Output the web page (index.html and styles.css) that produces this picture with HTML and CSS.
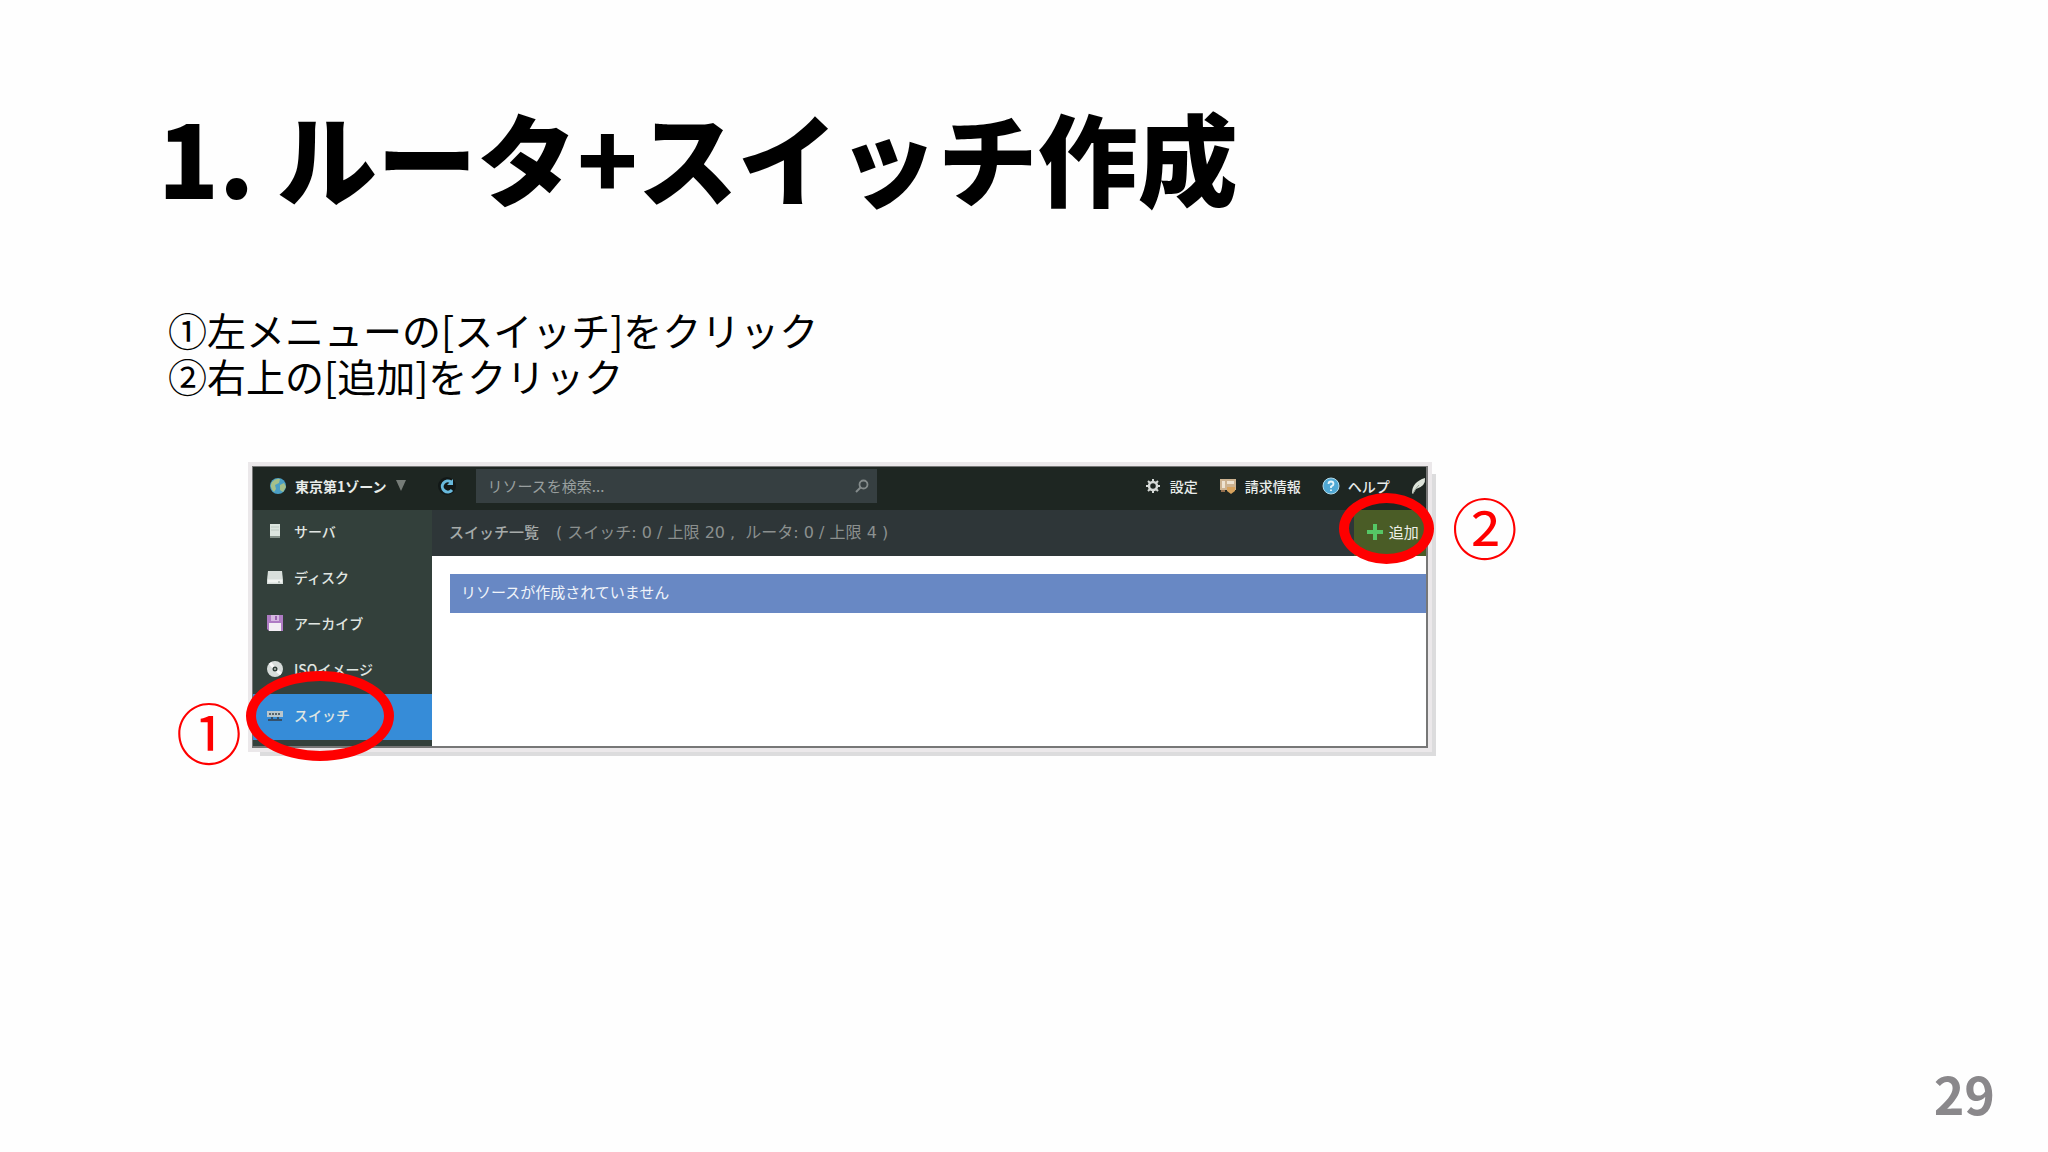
FILE: index.html
```html
<!DOCTYPE html>
<html lang="ja">
<head>
<meta charset="utf-8">
<title>1. ルータ+スイッチ作成</title>
<link rel="stylesheet" href="styles.css">
</head>
<body>
<main class="slide">
  <h1 class="title">1. ルータ+スイッチ作成</h1>
  <p class="steps">①左メニューの[スイッチ]をクリック<br>②右上の[追加]をクリック</p>

  <section class="console" aria-label="コントロールパネル">
    <header class="topbar">
      <button class="zone" type="button">
        <svg class="icon" viewBox="0 0 18 18"><circle cx="9" cy="9" r="8" fill="#4a9fc6"/><path d="M3 5Q7 1 11 2L10 6 6 8 7 12 5 15Q0 10 3 5ZM11 8l4-2 2 4-3 5-3-2Z" fill="#a5c08a"/></svg>
        <span>東京第1ゾーン</span>
        <svg class="caret" viewBox="0 0 12 11"><path d="M1 0H11L6 11Z" fill="#767c78"/></svg>
      </button>
      <button class="reload" type="button" aria-label="更新">
        <svg class="icon" viewBox="0 0 18 18"><circle cx="9" cy="9" r="9" fill="#121817"/><path d="M14 13A5.500 5.500 0 1 1 13 5" fill="none" stroke="#68b9dc" stroke-width="3"/><path d="M15 2V8H9Z" fill="#68b9dc"/></svg>
      </button>
      <label class="search">
        <input type="text" placeholder="リソースを検索..." aria-label="リソースを検索">
        <svg class="lens" viewBox="0 0 14 14"><circle cx="8.500" cy="5.500" r="4" fill="none" stroke="#848b8b" stroke-width="1.800"/><path d="M5.500 8.500 1 13" stroke="#848b8b" stroke-width="2"/></svg>
      </label>
      <nav class="tools">
        <a href="#settings"><svg class="icon" viewBox="0 0 18 18"><circle cx="9" cy="9" r="4" fill="none" stroke="#d5d9d7" stroke-width="2.500"/><path d="M9 2V5M9 13V16M2 9H5M13 9H16M4 4 6 6M12 12l2 2M4 14l2-2M12 6l2-2" stroke="#d5d9d7" stroke-width="2"/></svg>設定</a>
        <a href="#billing"><svg class="icon" viewBox="0 0 18 18"><path d="M1 2H17V13H1Z" fill="#cdb391"/><path d="M3 4H6V11H3ZM8 4H15V7H8Z" fill="#eee3d1"/><path d="M8 10H16V14L12 17 8 14Z" fill="#d8a35d"/><path d="M2 13H6V15H2Z" fill="#926d4d"/></svg>請求情報</a>
        <a href="#help"><svg class="icon" viewBox="0 0 18 18"><circle cx="9" cy="9" r="8" fill="#4fa8d4" stroke="#b2d9e8"/><path d="M6.500 7Q6.500 4.500 9 4.500T11.500 7Q11.500 8.500 9 9.500V11M9 12.500V14" fill="none" stroke="#e6f5fa" stroke-width="1.800"/></svg>ヘルプ</a>
        <a href="#notes" aria-label="ノート"><svg class="feather" viewBox="0 0 15 17"><path d="M1 16Q1 5 14 1Q15 9 5 12L2 17Z" fill="#dce3d9"/><path d="M2 16Q5 11 8 8" fill="none" stroke="#909b90"/></svg></a>
      </nav>
    </header>

    <div class="workspace">
      <nav class="sidebar">
        <a href="#server"><svg class="icon" viewBox="0 0 18 18"><path d="M4 2H14V15H4Z" fill="#dce5df"/><path d="M5 5H13M5 8H13" stroke="#bdcac2"/><path d="M4 15H14" stroke="#849189" stroke-width="2"/></svg>サーバ</a>
        <a href="#disk"><svg class="icon" viewBox="0 0 18 18"><path d="M2 3H16L17 12V16H1V12Z" fill="#d8dfdb"/><path d="M2 13H16" stroke="#f2f5f2" stroke-width="3"/><path d="M12 14H14" stroke="#8a9890"/></svg>ディスク</a>
        <a href="#archive"><svg class="icon" viewBox="0 0 18 18"><path d="M1 1H17V17H3L1 15Z" fill="#af7bc4"/><path d="M5 1H13V7H5Z" fill="#d6b8e1"/><path d="M9 2H11V6H9Z" fill="#9b65b1"/><path d="M3 9H15V17H3Z" fill="#f3eef4"/></svg>アーカイブ</a>
        <a href="#iso"><svg class="icon" viewBox="0 0 18 18"><circle cx="9" cy="9" r="8" fill="#d7dcda"/><path d="M9 9 4 3M9 9l6 5" stroke="#f8f8f8" stroke-width="3"/><circle cx="9" cy="9" r="2.500" fill="#303e39"/><circle cx="9" cy="9" r="1" fill="#b7bcb9"/></svg>ISOイメージ</a>
        <a class="active" href="#switch"><svg class="icon" viewBox="0 0 18 18"><path d="M1 5H17V11H1Z" fill="#bac6cc"/><path d="M3 8H15" stroke="#59656d" stroke-width="2" stroke-dasharray="2 1"/><path d="M2 14H16M6 11V15M12 11V15" stroke="#35516c" stroke-width="2"/></svg>スイッチ<span class="ring ring-menu"></span><strong class="mark mark-menu">①</strong></a>
      </nav>
      <div class="content">
        <div class="subbar">
          <h2>スイッチ一覧</h2>
          <span class="quota">( スイッチ: 0 / 上限 20 ,&nbsp; ルータ: 0 / 上限 4 )</span>
          <button class="add" type="button"><svg class="icon" viewBox="0 0 18 18"><path d="M7 2H11V8H17V12H11V18H7V12H1V8H7Z" fill="#55c765"/></svg>追加<span class="ring ring-add"></span><strong class="mark mark-add">②</strong></button>
        </div>
        <p class="notice">リソースが作成されていません</p>
      </div>
    </div>
  </section>
  <footer class="page-number">29</footer>
</main>
</body>
</html>
```
FILE: styles.css
```css
* { box-sizing: border-box; }
body {
  margin: 0;
  background: #fefefe;
  color: #000;
  font-family: "Noto Sans CJK JP", sans-serif;
}
.slide {
  display: flex;
  flex-direction: column;
  min-height: 100vh;
  padding: 84px 53px 27px 158px;
}
.title {
  margin: 0;
  font-size: 100px;
  line-height: 144px;
  font-weight: 900;
}
.steps {
  margin: 78px 0 0 10px;
  font-size: 39px;
  line-height: 46px;
}
.console {
  width: 64%;
  margin: 68px 0 0 94px;
  border: 2px solid #777;
  border-width: 1px 2px 2px 1px;
  background: #fff;
  box-shadow: 0 0 0 4px #ebe8ea, 8px 8px 0 0 #dcdcdd;
  font-size: 15px;
}
.icon { width: 18px; height: 18px; flex: none; }
button { border: 0; padding: 0; background: none; color: inherit; font: inherit; }
a { color: inherit; text-decoration: none; }
.topbar {
  display: flex;
  align-items: center;
  height: 43px;
  padding-bottom: 6px;
  background: #1e2622;
  color: #e8ecea;
  font-size: 14px;
}
.zone {
  display: flex;
  align-items: center;
  gap: 8px;
  margin-left: 16px;
  font-weight: 700;
}
.caret { width: 12px; height: 11px; }
.reload { display: flex; margin-left: 31px; }
.search {
  display: flex;
  align-items: center;
  width: 401px;
  height: 34px;
  margin: 0 auto 0 20px;
  padding: 0 8px 0 12px;
  background: #363f41;
}
.search input {
  flex: 1;
  min-width: 0;
  padding: 0;
  border: 0;
  background: none;
  color: #999f9f;
  font: inherit;
  font-size: 15px;
}
.search input::placeholder { color: #999f9f; opacity: 1; }
.lens { width: 14px; height: 14px; }
.tools { display: flex; gap: 21px; font-weight: 500; }
.tools a { display: flex; align-items: center; gap: 8px; }
.feather { width: 15px; height: 17px; }
.workspace { display: flex; }
.sidebar {
  width: 179px;
  padding-bottom: 6px;
  background: #33403b;
  color: #e0e6e2;
  font-size: 14px;
  font-weight: 500;
}
.sidebar a {
  position: relative;
  display: flex;
  align-items: center;
  gap: 10px;
  height: 46px;
  padding: 0 0 4px 13px;
}
.sidebar .active { background: #368cd8; }
.content { flex: 1; min-width: 0; }
.subbar {
  display: flex;
  align-items: center;
  height: 46px;
  padding: 0 0 4px 17px;
  background: #2e3638;
  color: #a6abaa;
}
.subbar h2 { margin: 0; font-size: 15px; font-weight: 500; }
.quota {
  margin-left: 17px;
  color: #8b908f;
  font-family: "DejaVu Sans", "Noto Sans CJK JP", sans-serif;
  font-size: 16px;
}
.add {
  position: relative;
  display: flex;
  align-items: center;
  align-self: flex-start;
  gap: 5px;
  height: 46px;
  margin-left: auto;
  padding: 0 7px 4px 12px;
  background: #4a5c26;
  color: #edf0e7;
}
.notice {
  margin: 18px 0 0 18px;
  padding: 0 11px 4px;
  background: #6888c4;
  color: #f0f4fa;
  font-size: 15px;
  line-height: 35px;
}
.ring {
  position: absolute;
  z-index: 1;
  border: 10px solid #f00;
  border-radius: 50%;
}
.ring-menu { left: -7px; top: -23px; width: 148px; height: 90px; }
.ring-add { right: -8px; top: -17px; width: 95px; height: 71px; }
.mark {
  position: absolute;
  color: #f00;
  font-size: 66px;
  font-weight: 400;
  line-height: 66px;
}
.mark-menu { right: 190px; top: 3px; }
.mark-add { left: 98px; top: -18px; }
.page-number {
  margin-top: auto;
  align-self: flex-end;
  color: #8a888b;
  font-size: 52px;
  line-height: 64px;
  font-weight: 700;
}
```
